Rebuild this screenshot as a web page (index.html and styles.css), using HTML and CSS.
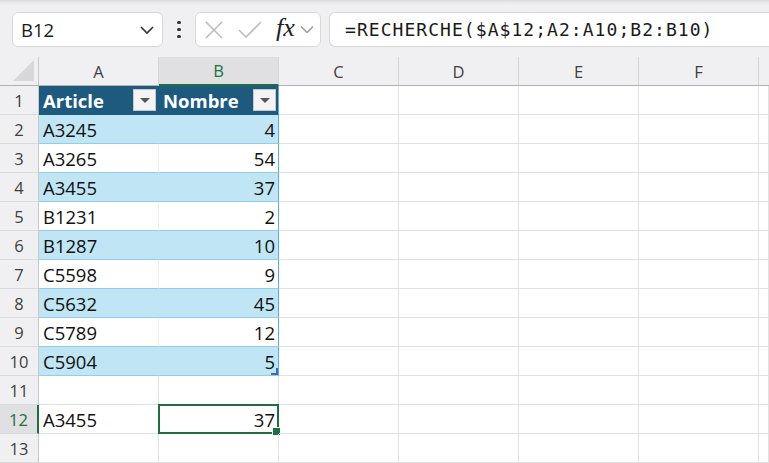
FILE: index.html
```html
<!DOCTYPE html>
<html lang="fr">
<head>
<meta charset="utf-8">
<title>Excel</title>
<link rel="stylesheet" href="styles.css">
</head>
<body>
<div class="topbar">
  <div class="namebox">
    <span class="ref">B12</span>
    <svg class="chev" width="16" height="10" viewBox="0 0 16 10"><path d="M2 2 L8 8 L14 2" fill="none" stroke="#333" stroke-width="1.6"/></svg>
  </div>
  <div class="dots"><span></span><span></span><span></span></div>
  <div class="fxbox">
    <svg class="ic-x" width="20" height="20" viewBox="0 0 20 20"><path d="M2 2 L18 18 M18 2 L2 18" stroke="#bdbdbd" stroke-width="1.6" fill="none"/></svg>
    <svg class="ic-check" width="24" height="18" viewBox="0 0 24 18"><path d="M1 9 L8 16 L23 1" stroke="#bdbdbd" stroke-width="1.6" fill="none"/></svg>
    <span class="fx">fx</span>
    <svg class="chev2" width="14" height="9" viewBox="0 0 14 9"><path d="M1 1.5 L7 7.5 L13 1.5" fill="none" stroke="#9a9a9a" stroke-width="1.5"/></svg>
  </div>
  <div class="formula">=RECHERCHE($A$12;A2:A10;B2:B10)</div>
</div>

<div class="sheet">
  <div class="corner"></div>
  <div class="ch">A</div><div class="ch colsel">B</div><div class="ch">C</div><div class="ch">D</div><div class="ch">E</div><div class="ch">F</div><div class="ch last"></div>

  <div class="rh">1</div>
  <div class="c th"><span>Article</span><span class="filter"></span></div>
  <div class="c th tr"><span>Nombre</span><span class="filter"></span></div>
  <div class="c"></div><div class="c"></div><div class="c"></div><div class="c"></div><div class="c"></div>

  <div class="rh">2</div>
  <div class="c band">A3245</div><div class="c band tr num">4</div>
  <div class="c"></div><div class="c"></div><div class="c"></div><div class="c"></div><div class="c"></div>

  <div class="rh">3</div>
  <div class="c plain">A3265</div><div class="c plain tr num">54</div>
  <div class="c"></div><div class="c"></div><div class="c"></div><div class="c"></div><div class="c"></div>

  <div class="rh">4</div>
  <div class="c band">A3455</div><div class="c band tr num">37</div>
  <div class="c"></div><div class="c"></div><div class="c"></div><div class="c"></div><div class="c"></div>

  <div class="rh">5</div>
  <div class="c plain">B1231</div><div class="c plain tr num">2</div>
  <div class="c"></div><div class="c"></div><div class="c"></div><div class="c"></div><div class="c"></div>

  <div class="rh">6</div>
  <div class="c band">B1287</div><div class="c band tr num">10</div>
  <div class="c"></div><div class="c"></div><div class="c"></div><div class="c"></div><div class="c"></div>

  <div class="rh">7</div>
  <div class="c plain">C5598</div><div class="c plain tr num">9</div>
  <div class="c"></div><div class="c"></div><div class="c"></div><div class="c"></div><div class="c"></div>

  <div class="rh">8</div>
  <div class="c band">C5632</div><div class="c band tr num">45</div>
  <div class="c"></div><div class="c"></div><div class="c"></div><div class="c"></div><div class="c"></div>

  <div class="rh">9</div>
  <div class="c plain">C5789</div><div class="c plain tr num">12</div>
  <div class="c"></div><div class="c"></div><div class="c"></div><div class="c"></div><div class="c"></div>

  <div class="rh">10</div>
  <div class="c band">C5904</div><div class="c band tr num endcell">5</div>
  <div class="c"></div><div class="c"></div><div class="c"></div><div class="c"></div><div class="c"></div>

  <div class="rh">11</div>
  <div class="c"></div><div class="c"></div>
  <div class="c"></div><div class="c"></div><div class="c"></div><div class="c"></div><div class="c"></div>

  <div class="rh rowsel">12</div>
  <div class="c">A3455</div><div class="c num sel">37</div>
  <div class="c"></div><div class="c"></div><div class="c"></div><div class="c"></div><div class="c"></div>

  <div class="rh">13</div>
  <div class="c"></div><div class="c"></div>
  <div class="c"></div><div class="c"></div><div class="c"></div><div class="c"></div><div class="c"></div>
</div>
</body>
</html>
```

FILE: styles.css
```css
* { box-sizing: border-box; }
html, body { margin: 0; padding: 0; }
body {
  width: 769px;
  height: 463px;
  overflow: hidden;
  background: #f0f0f2;
  font-family: "Open Sans", "Liberation Sans", sans-serif;
  color: #111;
}

.topbar {
  height: 57px;
  display: flex;
  align-items: flex-start;
  padding: 12px 0 0 12px;
  background: linear-gradient(#d9d9dc 0, #ececee 3px, #f0f0f2 6px);
}

.namebox {
  width: 151px;
  height: 35px;
  background: #fff;
  border: 1px solid #d8d8d8;
  border-radius: 6px;
  display: flex;
  align-items: center;
  justify-content: space-between;
  padding: 0 7px 0 8px;
  font-size: 18.5px;
}
.namebox .ref { color: #1a1a1a; }

.dots {
  width: 32px;
  height: 35px;
  display: flex;
  flex-direction: column;
  align-items: center;
  justify-content: center;
  gap: 3.5px;
}
.dots span {
  width: 3.5px;
  height: 3.5px;
  border-radius: 50%;
  background: #333;
}

.fxbox {
  width: 126px;
  height: 35px;
  background: #fff;
  border: 1px solid #d8d8d8;
  border-radius: 6px;
  display: flex;
  align-items: center;
  padding-left: 8px;
}
.ic-x { margin-right: 14px; }
.ic-check { margin-right: 14px; }
.fx {
  font-family: "Liberation Serif", serif;
  font-style: italic;
  font-size: 26px;
  line-height: 1;
  color: #222;
  margin-right: 5px;
  margin-top: -3px;
}

.formula {
  flex: 1;
  height: 35px;
  margin-left: 8px;
  background: #fff;
  border: 1px solid #d8d8d8;
  border-right: none;
  border-radius: 6px 0 0 6px;
  display: flex;
  align-items: center;
  padding-left: 15px;
  font-family: "DejaVu Sans Mono", "Liberation Mono", monospace;
  font-size: 18px;
  letter-spacing: 1.05px;
  color: #1a1a1a;
}

.sheet {
  display: grid;
  grid-template-columns: 39px repeat(6, 120px) 10px;
  grid-auto-rows: 29px;
  background: #fff;
}

.corner {
  background: #f0f0f2;
  border-right: 1px solid #c8c8c8;
  border-bottom: 1px solid #b0b0b0;
  position: relative;
}
.corner::after {
  content: "";
  position: absolute;
  right: 4px;
  bottom: 4px;
  width: 0;
  height: 0;
  border-left: 21px solid transparent;
  border-bottom: 21px solid #d7d7d9;
}

.ch {
  background: #f0f0f2;
  border-right: 1px solid #d6d6d6;
  border-bottom: 1px solid #b0b0b0;
  display: flex;
  align-items: center;
  justify-content: center;
  font-size: 16.5px;
  color: #3f3f3f;
}
.ch.colsel {
  background: #e0e0e2;
  color: #1e6e42;
  border-bottom: 2px solid #1e6e42;
}
.ch.last { border-right: none; }

.rh {
  background: #f0f0f2;
  border-right: 1px solid #c8c8c8;
  border-bottom: 1px solid #dadada;
  display: flex;
  align-items: center;
  justify-content: center;
  font-size: 16.5px;
  color: #3f3f3f;
}
.rh.rowsel {
  background: #e0e0e2;
  color: #1e6e42;
  border-right: 2px solid #1e6e42;
}

.c {
  border-right: 1px solid #e1e1e1;
  border-bottom: 1px solid #e1e1e1;
  display: flex;
  align-items: center;
  padding: 0 3px 0 4px;
  font-size: 18.5px;
  white-space: nowrap;
  position: relative;
}
.c.num { justify-content: flex-end; }

.c.th {
  background: #1d5a7d;
  color: #fff;
  font-weight: 700;
  justify-content: space-between;
  padding-right: 2px;
  border-right: 1px solid #1d5a7d;
  border-bottom: 1px solid #1d5a7d;
}
.c.th.tr { border-right: 1px solid #5aafd8; }

.filter {
  width: 23px;
  height: 22px;
  background: #f4f4f5;
  border: 1px solid #c9c9cc;
  position: relative;
  flex: none;
}
.filter::after {
  content: "";
  position: absolute;
  left: 6px;
  top: 8px;
  border-left: 5px solid transparent;
  border-right: 5px solid transparent;
  border-top: 5px solid #555;
}

.c.band {
  background: #c0e6f5;
  border-right-color: #c0e6f5;
  border-bottom: 1px solid #94cde8;
}
.c.plain {
  background: #fff;
  border-right-color: #f0f0f0;
  border-bottom: 1px solid #94cde8;
}
.c.tr { border-right: 1px solid #5aafd8; }

.c.endcell::after {
  content: "";
  position: absolute;
  right: 0;
  bottom: 0;
  width: 5px;
  height: 5px;
  border-right: 2px solid #3a6db3;
  border-bottom: 2px solid #3a6db3;
}

.c.sel::before {
  content: "";
  position: absolute;
  left: -1px;
  top: -1px;
  right: -1px;
  bottom: -1px;
  border: 2px solid #1e6e42;
}
.c.sel::after {
  content: "";
  position: absolute;
  right: -3px;
  bottom: -3px;
  width: 7px;
  height: 7px;
  background: #1e6e42;
  border: 1px solid #fff;
}
```
